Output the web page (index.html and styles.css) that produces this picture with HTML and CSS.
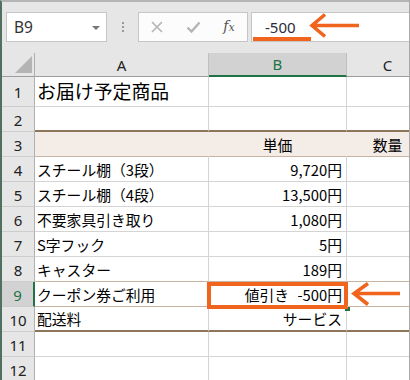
FILE: index.html
```html
<!DOCTYPE html>
<html lang="ja">
<head>
  <meta charset="UTF-8">
  <title>お届け予定商品</title>
  <link rel="stylesheet" href="styles.css">
</head>
<body>
  <div class="app">
    <div class="toolbar">
      <div class="namebox">
        <span class="name">B9</span>
        <span class="drop"></span>
      </div>
      <div class="grip"><i></i><i></i><i></i></div>
      <div class="fbtns">
        <span class="fbtn">
          <svg width="12" height="12" viewBox="0 0 12 12"><path d="M1 1L11 11M11 1L1 11" stroke="#b4b4b4" stroke-width="1.6" fill="none"/></svg>
        </span>
        <span class="fbtn">
          <svg width="15" height="12" viewBox="0 0 15 12"><path d="M1.5 6.5L5.5 10.5L13.5 1.5" stroke="#b4b4b4" stroke-width="2.4" fill="none"/></svg>
        </span>
        <span class="fbtn fx">f<small>x</small></span>
      </div>
      <div class="finput">
        <span class="fval">-500</span>
        <span class="uline"></span>
        <svg class="arrow-top" width="56" height="30" viewBox="0 0 56 30">
          <path d="M17 2.5L4 13.5L17 24.5M4 13.5H51" stroke="#f0641e" stroke-width="3.6" fill="none"/>
        </svg>
      </div>
    </div>

    <div class="sheet">
      <div class="hd corner"><span class="tri"></span></div>
      <div class="hd col">A</div>
      <div class="hd col sel">B</div>
      <div class="hd col">C</div>

      <div class="rh">1</div>
      <div class="c title">お届け予定商品</div>
      <div class="c"></div>
      <div class="c"></div>

      <div class="rh">2</div>
      <div class="c r2"></div>
      <div class="c r2"></div>
      <div class="c r2"></div>

      <div class="rh">3</div>
      <div class="c r3"></div>
      <div class="c r3 mid">単価</div>
      <div class="c r3 mid">数量</div>

      <div class="rh">4</div>
      <div class="c">スチール棚（3段）</div>
      <div class="c num">9,720円</div>
      <div class="c"></div>

      <div class="rh">5</div>
      <div class="c">スチール棚（4段）</div>
      <div class="c num">13,500円</div>
      <div class="c"></div>

      <div class="rh">6</div>
      <div class="c">不要家具引き取り</div>
      <div class="c num">1,080円</div>
      <div class="c"></div>

      <div class="rh">7</div>
      <div class="c">S字フック</div>
      <div class="c num">5円</div>
      <div class="c"></div>

      <div class="rh">8</div>
      <div class="c r8">キャスター</div>
      <div class="c num r8">189円</div>
      <div class="c r8"></div>

      <div class="rh sel-row">9</div>
      <div class="c r9">クーポン券ご利用</div>
      <div class="c num r9 active">値引き -500円<span class="handle"></span><span class="mark"></span></div>
      <div class="c r9 arrow-cell">
        <svg class="arrow-side" width="54" height="25" viewBox="0 0 54 25">
          <path d="M18 1.5L4 11.5L18 22.5M4 11.5H50" stroke="#f0641e" stroke-width="3.6" fill="none"/>
        </svg>
      </div>

      <div class="rh">10</div>
      <div class="c r10">配送料</div>
      <div class="c num r10">サービス</div>
      <div class="c r10"></div>

      <div class="rh">11</div>
      <div class="c"></div>
      <div class="c"></div>
      <div class="c"></div>

      <div class="rh">12</div>
      <div class="c"></div>
      <div class="c"></div>
      <div class="c"></div>
    </div>
  </div>
</body>
</html>
```

FILE: styles.css
```css
html,
body {
  margin: 0;
}

body {
  width: 410px;
  height: 380px;
  overflow: hidden;
  background: #fff;
  font-family: "Noto Sans CJK JP", "Noto Sans", sans-serif;
}

*, *:before, *:after {
  box-sizing: border-box;
}

.app {
  height: 380px;
  border-top: 2px solid #b5b5b5;
  border-left: 2px solid #52705f;
  border-right: 1px solid #a9a9a9;
  background: #e6e6e6;
  overflow: hidden;
}

/* formula bar */
.toolbar {
  height: 51px;
  padding: 10px 0 0 4px;
  display: flex;
  align-items: flex-start;
}

.namebox {
  width: 101px;
  height: 30px;
  flex: none;
  border: 1px solid #c6c6c6;
  background: #fff;
  display: flex;
  align-items: center;
  padding-left: 7px;
}

.name {
  font-family: "Noto Sans", sans-serif;
  font-size: 15.5px;
  color: #333;
}

.drop {
  margin-left: auto;
  margin-right: 6px;
  margin-top: 1px;
  border-top: 4px solid #777;
  border-left: 4px solid transparent;
  border-right: 4px solid transparent;
}

.grip {
  width: 31px;
  height: 30px;
  flex: none;
  display: flex;
  flex-direction: column;
  align-items: center;
  justify-content: center;
  gap: 2px;
}

.grip i {
  width: 2px;
  height: 2px;
  background: #9a9a9a;
}

.fbtns {
  width: 110px;
  height: 30px;
  flex: none;
  border: 1px solid #c6c6c6;
  background: #fbfcfb;
  display: flex;
}

.fbtn {
  width: 36px;
  display: flex;
  align-items: center;
  justify-content: center;
}

.fx {
  font-family: "DejaVu Serif", "Liberation Serif", serif;
  font-style: italic;
  font-size: 14px;
  color: #555;
  padding-bottom: 2px;
}

.fx small {
  font-size: 11px;
  margin-top: 3px;
}

.finput {
  flex: 1;
  height: 30px;
  margin-left: 3px;
  border: 1px solid #c6c6c6;
  border-right: 0;
  background: #fff;
  padding-left: 13px;
  display: flex;
  align-items: center;
  position: relative;
}

.fval {
  font-family: "Noto Sans", sans-serif;
  font-size: 15px;
  color: #2b2b3a;
}

.uline {
  position: absolute;
  left: 1px;
  top: 24px;
  width: 58px;
  height: 4px;
  background: #f0641e;
}

.arrow-top {
  position: absolute;
  left: 56px;
  top: -1px;
}

/* grid */
.sheet {
  display: grid;
  grid-template-columns: 33px 174px 138px 82px;
  grid-template-rows: 24px 30px repeat(11, 25px);
  background: #fff;
}

.hd {
  background: #e6e6e6;
  border-bottom: 1px solid #9d9d9d;
  border-right: 1px solid #c0c0c0;
}

.corner {
  display: flex;
  align-items: flex-end;
  justify-content: flex-end;
  padding: 0 2px 3px 0;
  border-right-color: #b0b0b0;
}

.tri {
  width: 0;
  height: 0;
  border-bottom: 17px solid #b4b4b4;
  border-left: 17px solid transparent;
}

.col {
  display: flex;
  align-items: center;
  justify-content: center;
  font-family: "Noto Sans", sans-serif;
  font-size: 15px;
  color: #222;
}

.col.sel {
  background: #d2d2d2;
  color: #217346;
  border-bottom: 2px solid #217346;
}

.rh {
  background: #e6e6e6;
  border-right: 1px solid #b0b0b0;
  border-bottom: 1px solid #cdcdcd;
  display: flex;
  align-items: center;
  justify-content: center;
  font-family: "Noto Sans", sans-serif;
  font-size: 15px;
  color: #222;
  padding-top: 1px;
}

.rh.sel-row {
  background: #d2d2d2;
  color: #217346;
  border-right: 2px solid #217346;
}

.c {
  border-right: 1px solid #d4d4d4;
  border-bottom: 1px solid #d4d4d4;
  display: flex;
  align-items: center;
  padding: 0 4px 0 2px;
  font-size: 14.8px;
  color: #000;
  white-space: nowrap;
}

.title {
  font-size: 18.9px;
  padding-top: 0;
  padding-bottom: 2px;
}

.num {
  justify-content: flex-end;
}

.mid {
  justify-content: center;
  padding: 0;
}

.r2 {
  border-bottom: 2px solid #8c7558;
}

.r3 {
  background: #f3ece7;
  border-right-color: #f3ece7;
  border-bottom-color: #c9b59f;
}

.r8,
.r9 {
  border-bottom-color: #c9b59f;
}

.r10 {
  border-bottom: 2px solid #8c7558;
}

.active {
  position: relative;
  word-spacing: 5px;
}

.mark {
  position: absolute;
  left: -2px;
  top: 0;
  right: -2px;
  bottom: -3px;
  border: 4px solid #f0641e;
}

.handle {
  position: absolute;
  right: -4px;
  bottom: -5px;
  width: 5px;
  height: 5px;
  background: #217346;
}

.arrow-cell {
  position: relative;
}

.arrow-side {
  position: absolute;
  left: 3px;
  top: 0;
}
```
